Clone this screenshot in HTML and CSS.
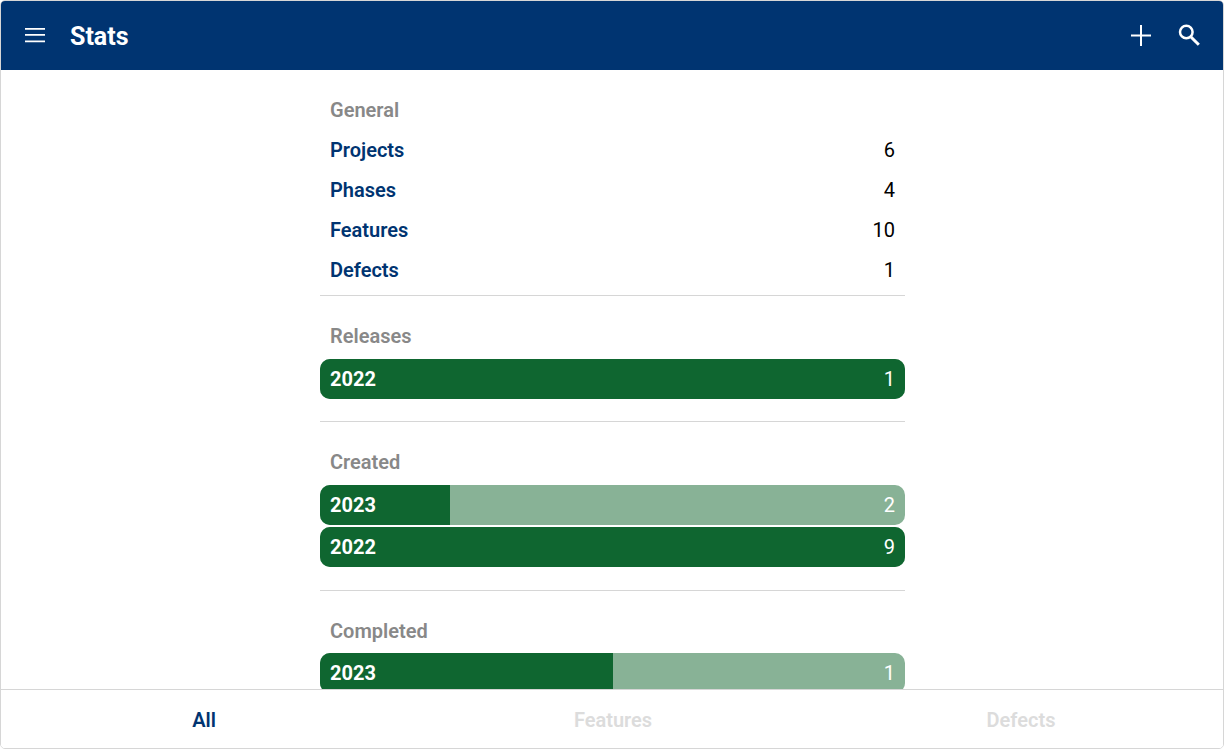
FILE: index.html
```html
<!DOCTYPE html>
<html lang="en">
<head>
<meta charset="utf-8">
<title>Stats</title>
<link rel="stylesheet" href="styles.css">
</head>
<body>
<div class="app">
  <header class="topbar">
    <button class="icon-btn menu-btn" aria-label="Menu">
      <svg viewBox="0 0 24 24" width="24" height="24"><path d="M2 4h20v1.7H2zM2 10h20v1.7H2zM2 16.500h20v1.700H2z" fill="#fff"/></svg>
    </button>
    <h1 class="title">Stats</h1>
    <div class="actions">
      <button class="icon-btn" aria-label="Add">
        <svg viewBox="0 0 24 24" width="24" height="24"><path d="M11 1h2v9.500h9v2h-9V22h-2v-9.500H2v-2h9z" fill="#fff"/></svg>
      </button>
      <button class="icon-btn" aria-label="Search">
        <svg viewBox="0 0 24 24" width="24" height="24"><circle cx="9.300" cy="8" r="6.300" fill="none" stroke="#fff" stroke-width="2.500"/><path d="M14 13l7.800 7.800" fill="none" stroke="#fff" stroke-width="3"/></svg>
      </button>
    </div>
  </header>
  <main class="content">
    <div class="column">
      <section class="section section-general">
        <h2 class="section-title">General</h2>
        <div class="row"><a class="row-label">Projects</a><span class="row-value">6</span></div>
        <div class="row"><a class="row-label">Phases</a><span class="row-value">4</span></div>
        <div class="row"><a class="row-label">Features</a><span class="row-value">10</span></div>
        <div class="row"><a class="row-label">Defects</a><span class="row-value">1</span></div>
      </section>
      <section class="section">
        <h2 class="section-title">Releases</h2>
        <div class="bar"><div class="bar-fill" style="width:100%"></div><span class="bar-year">2022</span><span class="bar-count">1</span></div>
      </section>
      <section class="section">
        <h2 class="section-title">Created</h2>
        <div class="bar"><div class="bar-fill" style="width:22.22%"></div><span class="bar-year">2023</span><span class="bar-count">2</span></div>
        <div class="bar"><div class="bar-fill" style="width:100%"></div><span class="bar-year">2022</span><span class="bar-count">9</span></div>
      </section>
      <section class="section">
        <h2 class="section-title">Completed</h2>
        <div class="bar"><div class="bar-fill" style="width:50%"></div><span class="bar-year">2023</span><span class="bar-count">1</span></div>
      </section>
    </div>
  </main>
  <nav class="tabs">
    <a class="tab tab-active">All</a>
    <a class="tab">Features</a>
    <a class="tab">Defects</a>
  </nav>
</div>
</body>
</html>
```
FILE: styles.css
```css
* { box-sizing: border-box; }
html, body { margin: 0; height: 100%; background: #fff; }
body { font-family: Roboto, "Liberation Sans", sans-serif; overflow: hidden; }
.app {
  height: 100vh;
  display: flex;
  flex-direction: column;
  border: 1px solid #d6d6d6;
  border-radius: 5px;
  overflow: hidden;
  background: #fff;
}
.topbar {
  flex: none;
  height: 69px;
  background: #003471;
  display: flex;
  align-items: center;
  color: #fff;
  padding: 0 22px;
}
.icon-btn {
  width: 24px;
  height: 24px;
  padding: 0;
  border: 0;
  background: none;
  display: block;
}
.icon-btn svg { display: block; }
.title {
  margin: 2px 0 0 23px;
  font-size: 25px;
  font-weight: 700;
  line-height: 32px;
}
.actions { margin-left: auto; display: flex; gap: 24px; }
.content { flex: 1; min-height: 0; overflow: hidden; }
.column { width: 585px; margin-left: 319px; padding-top: 20px; }
.section { border-bottom: 1px solid #d6d6d6; padding-bottom: 22.6px; margin-bottom: 20px; }
.section-general { padding-bottom: 5px; }
.section-title {
  margin: 0;
  padding: 0 10px;
  font-size: 20px;
  font-weight: 600;
  line-height: 40px;
  color: #888;
}
.row {
  display: flex;
  justify-content: space-between;
  align-items: center;
  height: 40px;
  padding: 0 10px;
  font-size: 20px;
}
.row-label { font-weight: 600; color: #003471; }
.row-value { color: #000; }
.bar {
  position: relative;
  height: 40px;
  margin-top: 2.5px;
  border-radius: 10px;
  overflow: hidden;
  background: #88b296;
  display: flex;
  justify-content: space-between;
  align-items: center;
  padding: 0 10px;
  font-size: 20px;
  color: #fff;
}
.bar-fill { position: absolute; left: 0; top: 0; bottom: 0; background: #0f6630; }
.bar-year { position: relative; font-weight: 700; }
.bar-count { position: relative; }
.tabs {
  flex: none;
  height: 59px;
  display: flex;
  padding-top: 1px;
  border-top: 1px solid #d6d6d6;
  background: #fff;
}
.tab {
  flex: 0 0 408px;
  display: flex;
  align-items: center;
  justify-content: center;
  font-size: 20px;
  font-weight: 600;
  color: #dcdcdc;
}
.tab-active { color: #003471; padding-right: 2px; }
```
